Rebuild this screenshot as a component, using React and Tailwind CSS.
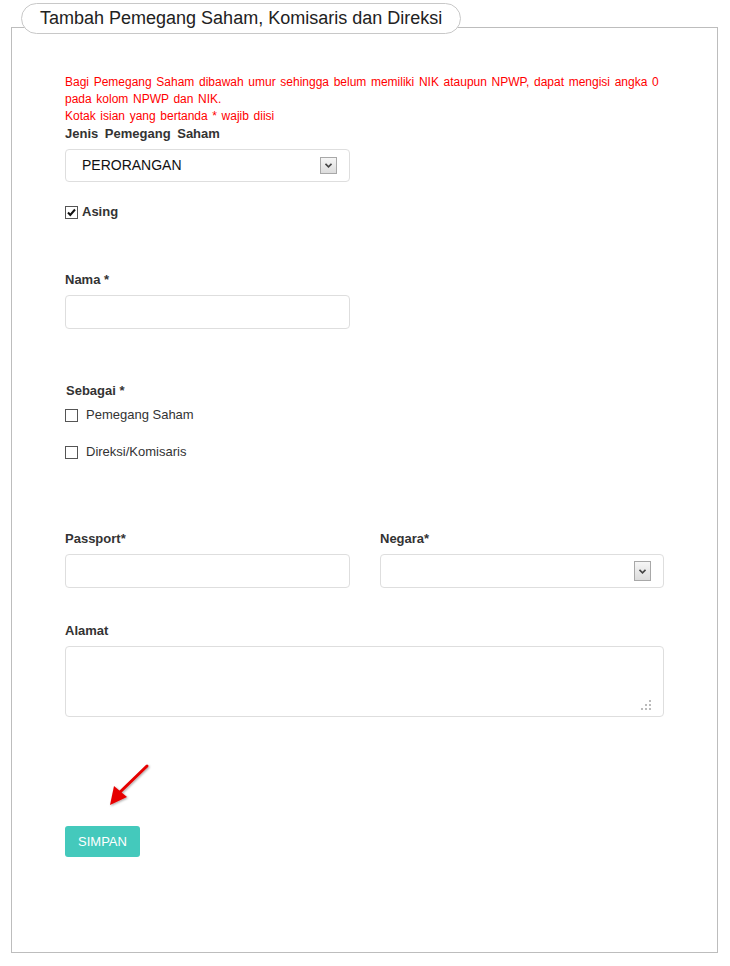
import React from "react";

function Check({ checked }) {
  return (
    <span className="inline-flex h-[13px] w-[13px] shrink-0 items-center justify-center border border-[#555] bg-white">
      {checked && (
        <svg width="11" height="11" viewBox="0 0 11 11">
          <path d="M2 5.5 L4.3 8 L9 2.5" fill="none" stroke="#111" strokeWidth="2" />
        </svg>
      )}
    </span>
  );
}

function DropBtn({ h }) {
  return (
    <span className={`flex w-[17px] items-center justify-center border border-[#a8a8a8] bg-gradient-to-b from-[#f6f6f6] to-[#dcdcdc] ${h}`}>
      <svg width="7" height="5" viewBox="0 0 7 5">
        <path d="M0.5 0.8 L3.5 3.8 L6.5 0.8" fill="none" stroke="#444" strokeWidth="1.6" />
      </svg>
    </span>
  );
}

export default function App() {
  const label = "text-[13px] font-bold leading-[18px] text-[#333]";
  return (
    <div className="bg-white pb-[13px] pl-[11px] pt-[27px] font-['Liberation_Sans',Arial,sans-serif]">
      <div className="relative w-[707px] border border-[#bdbdbd] pb-[95px] pl-[53px] pt-[46px]">
        <div className="absolute left-[9px] top-[-25px] flex h-[31px] items-center rounded-full border border-[#c8c8c8] bg-white pl-[18px] pr-[18px] text-[18px] text-[#222]">
          Tambah Pemegang Saham, Komisaris dan Direksi
        </div>

        <div className="w-[599px]">
          <div className="text-[12px] leading-[17px] text-[#ff0000] [word-spacing:1.3px]">
            Bagi Pemegang Saham dibawah umur sehingga belum memiliki NIK ataupun NPWP, dapat mengisi angka 0 pada kolom NPWP dan NIK.
            <br />
            Kotak isian yang bertanda * wajib diisi
          </div>
          <div className={`${label} [word-spacing:3px]`}>Jenis Pemegang Saham</div>
          <div className="mt-[6px] flex h-[33px] w-[285px] items-center justify-between rounded-[4px] border border-[#dedede] pl-[16px] pr-[12px] text-[14px] text-[#111]">
            <span>PERORANGAN</span>
            <DropBtn h="h-[17px]" />
          </div>

          <div className="mt-[21px] flex h-[18px] items-center gap-[4px]">
            <Check checked />
            <span className={label}>Asing</span>
          </div>

          <div className={`mt-[50px] ${label}`}>Nama *</div>
          <div className="mt-[6px] h-[34px] w-[285px] rounded-[4px] border border-[#dedede]" />

          <div className={`mt-[53px] pl-[1px] ${label}`}>Sebagai *</div>
          <div className="mt-[6px] flex h-[18px] items-center gap-[8px]">
            <Check />
            <span className="text-[13px] text-[#333]">Pemegang Saham</span>
          </div>
          <div className="mt-[19px] flex h-[18px] items-center gap-[8px]">
            <Check />
            <span className="text-[13px] text-[#333]">Direksi/Komisaris</span>
          </div>

          <div className="mt-[69px] flex gap-[30px]">
            <div className="w-[285px]">
              <div className={label}>Passport*</div>
              <div className="mt-[6px] h-[34px] w-[285px] rounded-[4px] border border-[#dedede]" />
            </div>
            <div className="w-[284px]">
              <div className={label}>Negara*</div>
              <div className="mt-[6px] flex h-[34px] w-[284px] items-center justify-end rounded-[4px] border border-[#dedede] pr-[12px]">
                <DropBtn h="h-[20px]" />
              </div>
            </div>
          </div>

          <div className={`mt-[34px] ${label}`}>Alamat</div>
          <div className="relative mt-[6px] h-[71px] w-[599px] rounded-[4px] border border-[#dedede]">
            <svg className="absolute bottom-[6px] right-[12px]" width="10" height="10" viewBox="0 0 10 10">
              <rect x="8" y="0" width="2" height="2" fill="#bbb" />
              <rect x="4" y="4" width="2" height="2" fill="#bbb" />
              <rect x="8" y="4" width="2" height="2" fill="#bbb" />
              <rect x="0" y="8" width="2" height="2" fill="#bbb" />
              <rect x="4" y="8" width="2" height="2" fill="#bbb" />
              <rect x="8" y="8" width="2" height="2" fill="#bbb" />
            </svg>
          </div>

          <div className="relative mt-[109px]">
            <svg className="absolute left-[37px] top-[-64px]" width="56" height="50" viewBox="0 0 56 50">
              <defs>
                <filter id="sh" x="-30%" y="-30%" width="160%" height="160%">
                  <feDropShadow dx="1" dy="1" stdDeviation="1" floodColor="#000" floodOpacity="0.35" />
                </filter>
              </defs>
              <g filter="url(#sh)">
                <path d="M45 4 L16 32" stroke="#e60000" strokeWidth="3" strokeLinecap="round" />
                <path d="M8 43 L12 24 L25 35 Z" fill="#e60000" />
              </g>
            </svg>
            <button className="flex h-[31px] w-[75px] items-center justify-center rounded-[3px] bg-[#44c9bc] text-[13px] text-white">
              SIMPAN
            </button>
          </div>
        </div>
      </div>
    </div>
  );
}
